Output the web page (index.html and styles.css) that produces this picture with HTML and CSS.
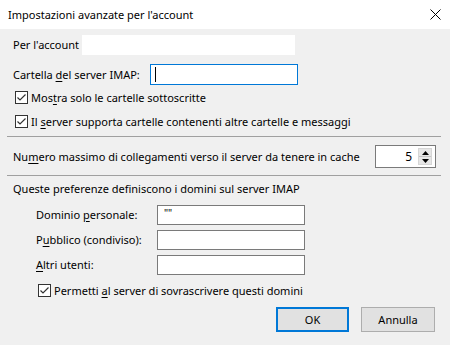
FILE: index.html
```html
<!DOCTYPE html>
<html lang="it">
<head>
<meta charset="utf-8">
<title>Impostazioni avanzate per l'account</title>
<link rel="stylesheet" href="styles.css">
</head>
<body>
<div class="window">
  <div class="titlebar">
    <span class="title">Impostazioni avanzate per l'account</span>
    <svg class="close" width="11" height="11" viewBox="0 0 11 11"><path d="M0.5 0.5 L10.5 10.5 M10.5 0.5 L0.5 10.5" stroke="#000" stroke-width="1" fill="none"/></svg>
  </div>
  <div class="content">
    <div class="row account">
      <span class="account-label">Per l'account</span>
      <span class="account-box"></span>
    </div>
    <div class="row imap">
      <span class="imap-label">Cartella <u>d</u>el server IMAP:</span>
      <div class="input focused"><span class="caret"></span></div>
    </div>
    <div class="check">
      <span class="box"><svg width="11" height="11" viewBox="0 0 11 11"><path d="M1.5 5.5 L4 8 L9.5 2.5" stroke="#333" stroke-width="1.2" fill="none"/></svg></span>
      <span>Mos<u>t</u>ra solo le cartelle sottoscritte</span>
    </div>
    <div class="check second">
      <span class="box"><svg width="11" height="11" viewBox="0 0 11 11"><path d="M1.5 5.5 L4 8 L9.5 2.5" stroke="#333" stroke-width="1.2" fill="none"/></svg></span>
      <span>Il <u>s</u>erver supporta cartelle contenenti altre cartelle e messaggi</span>
    </div>
    <div class="sep sep-first"></div>
    <div class="row cache">
      <span>Nu<u>m</u>ero massimo di collegamenti verso il server da tenere in cache</span>
      <div class="spin">
        <span class="spin-val">5</span>
        <div class="spin-btns">
          <span class="spin-btn"><svg width="7" height="4" viewBox="0 0 7 4"><path d="M3.5 0 L7 4 L0 4 Z" fill="#000"/></svg></span>
          <span class="spin-btn"><svg width="7" height="4" viewBox="0 0 7 4"><path d="M0 0 L7 0 L3.5 4 Z" fill="#000"/></svg></span>
        </div>
      </div>
    </div>
    <div class="sep sep-second"></div>
    <div class="note">Queste preferenze definiscono i domini sul server IMAP</div>
    <div class="domains">
      <span class="dlabel">Dominio <u>p</u>ersonale:</span>
      <div class="input plain"><span class="val">""</span></div>
      <span class="dlabel">P<u>u</u>bblico (condiviso):</span>
      <div class="input plain"></div>
      <span class="dlabel"><u>A</u>ltri utenti:</span>
      <div class="input plain"></div>
    </div>
    <div class="check indent">
      <span class="box"><svg width="11" height="11" viewBox="0 0 11 11"><path d="M1.5 5.5 L4 8 L9.5 2.5" stroke="#333" stroke-width="1.2" fill="none"/></svg></span>
      <span>Permetti <u>a</u>l server di sovrascrivere questi domini</span>
    </div>
    <div class="buttons">
      <button class="btn default">OK</button>
      <button class="btn">Annulla</button>
    </div>
  </div>
</div>
</body>
</html>
```
FILE: styles.css
```css
html, body {
  margin: 0;
  padding: 0;
}
body {
  width: 450px;
  height: 345px;
  overflow: hidden;
  background: #f0f0f0;
  font-family: "Noto Sans", "Liberation Sans", sans-serif;
  font-size: 11px;
  line-height: 16px;
  color: #000;
  white-space: nowrap;
}
.window {
  width: 450px;
  height: 345px;
}
.titlebar {
  height: 29px;
  background: #fff;
  display: flex;
  align-items: center;
  justify-content: space-between;
  padding: 0 9px 0 8px;
  box-sizing: border-box;
}
.title {
  font-size: 11px;
  line-height: 16px;
}
.close {
  display: block;
  margin-top: -1px;
}
.content {
  padding: 0 14px 0 13px;
  display: flex;
  flex-direction: column;
}
u {
  text-decoration: underline;
  text-underline-offset: 2px;
}
.row {
  display: flex;
  align-items: center;
}
.row > span {
  flex: none;
}
.account {
  margin-top: 6px;
  height: 20px;
}
.account-label {
  width: 69px;
}
.account-box {
  width: 213px;
  height: 20px;
  background: #fff;
}
.imap {
  margin-top: 9px;
}
.imap-label {
  width: 137px;
}
.input {
  box-sizing: border-box;
  background: #fff;
  border: 1px solid #7a7a7a;
  height: 20px;
  display: flex;
  align-items: center;
}
.input.focused {
  width: 148px;
  height: 21px;
  border-color: #0078d7;
  padding-left: 4px;
}
.caret {
  width: 1px;
  height: 15px;
  background: #000;
}
.check {
  display: flex;
  align-items: center;
  height: 17px;
  margin-top: 4px;
  margin-left: 2px;
}
.check.second {
  margin-top: 7px;
}
.box {
  box-sizing: border-box;
  width: 13px;
  height: 13px;
  border: 1px solid #333;
  background: #fff;
  display: flex;
  align-items: center;
  justify-content: center;
  margin-right: 3px;
  flex: none;
}
.box svg {
  display: block;
}
.sep {
  height: 1px;
  background: #a0a0a0;
  margin-left: -6px;
  margin-right: -5px;
}
.sep-first {
  margin-top: 6px;
}
.cache {
  margin-top: 8px;
  justify-content: space-between;
}
.spin {
  box-sizing: border-box;
  width: 61px;
  height: 23px;
  border: 1px solid #7a7a7a;
  background: #fff;
  display: flex;
  align-items: center;
  justify-content: flex-end;
  padding-right: 3px;
  flex: none;
}
.spin-val {
  margin-right: 6px;
  font-size: 12px;
}
.spin-btns {
  display: flex;
  flex-direction: column;
  width: 14px;
  height: 17px;
  background: #e6e6e6;
  border: 1px solid #d6d6d6;
  box-sizing: border-box;
}
.spin-btn {
  flex: 1;
  display: flex;
  align-items: center;
  justify-content: center;
}
.spin-btn + .spin-btn {
  border-top: 1px solid #c4c4c4;
}
.spin-btn svg {
  display: block;
}
.sep-second {
  margin-top: 7px;
}
.note {
  margin-top: 5px;
  line-height: 16px;
}
.domains {
  margin-top: 8px;
  display: grid;
  grid-template-columns: 121px 148px;
  row-gap: 5px;
  align-items: center;
  padding-left: 23px;
}
.input.plain {
  width: 148px;
  height: 20px;
  padding-left: 4px;
}
.val {
  font-size: 10px;
  color: #000;
  line-height: 1;
  margin-top: -4px;
  margin-left: 2px;
}
.check.indent {
  margin-top: 7px;
  margin-left: 25px;
}
.buttons {
  display: flex;
  justify-content: flex-end;
  gap: 12px;
  margin-top: 8px;
  margin-right: 1px;
}
.btn {
  box-sizing: border-box;
  width: 74px;
  height: 25px;
  font-family: inherit;
  font-size: 11px;
  color: #000;
  background: #e1e1e1;
  border: 1px solid #adadad;
  padding: 0;
  margin: 0;
}
.btn.default {
  border: 2px solid #0078d7;
  width: 73px;
}
```
